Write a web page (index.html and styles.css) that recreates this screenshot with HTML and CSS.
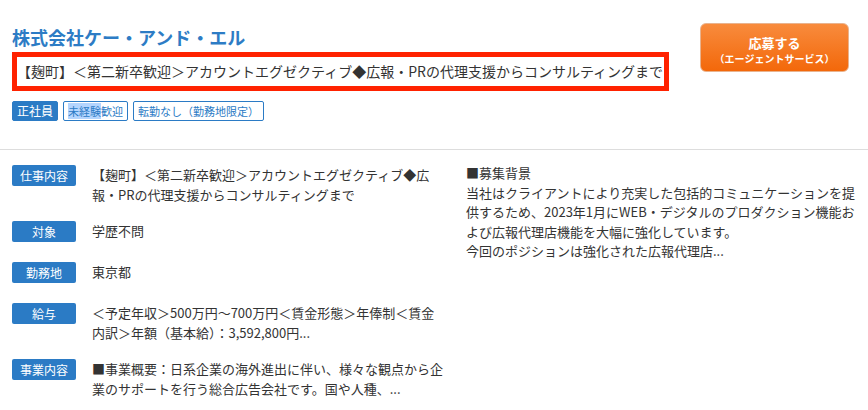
FILE: index.html
```html
<!DOCTYPE html>
<html lang="ja">
<head>
<meta charset="utf-8">
<title>株式会社ケー・アンド・エル</title>
<link rel="stylesheet" href="styles.css">
</head>
<body>
<div class="page">
  <header class="job-head">
    <div class="head-main">
      <h1 class="company">株式会社ケー・アンド・エル</h1>
      <h2 class="job-title">【麹町】＜第二新卒歓迎＞アカウントエグゼクティブ◆広報・PRの代理支援からコンサルティングまで</h2>
      <ul class="tags">
        <li class="tag tag-fill">正社員</li>
        <li class="tag"><span class="sel">未経験</span>歓迎</li>
        <li class="tag">転勤なし（勤務地限定）</li>
      </ul>
    </div>
    <a class="apply" href="#">
      <span class="apply-main">応募する</span>
      <span class="apply-sub">（エージェントサービス）</span>
    </a>
  </header>
  <section class="job-body">
    <div class="summary">
      <div class="row">
        <span class="label">仕事内容</span>
        <p class="val">【麹町】＜第二新卒歓迎＞アカウントエグゼクティブ◆広報・PRの代理支援からコンサルティングまで</p>
      </div>
      <div class="row">
        <span class="label">対象</span>
        <p class="val">学歴不問</p>
      </div>
      <div class="row">
        <span class="label">勤務地</span>
        <p class="val">東京都</p>
      </div>
      <div class="row">
        <span class="label">給与</span>
        <p class="val">＜予定年収＞500万円〜700万円＜賃金形態＞年俸制＜賃金内訳＞年額（基本給）：3,592,800円...</p>
      </div>
      <div class="row">
        <span class="label">事業内容</span>
        <p class="val">■事業概要：日系企業の海外進出に伴い、様々な観点から企業のサポートを行う総合広告会社です。国や人種、...</p>
      </div>
    </div>
    <div class="background">
      <p class="bg-text">■募集背景<br>当社はクライアントにより充実した包括的コミュニケーションを提供するため、2023年1月にWEB・デジタルのプロダクション機能および広報代理店機能を大幅に強化しています。<br>今回のポジションは強化された広報代理店...</p>
    </div>
  </section>
</div>
</body>
</html>
```

FILE: styles.css
```css
* {
  box-sizing: border-box;
}

html, body {
  margin: 0;
  padding: 0;
  background: #ffffff;
}

body {
  font-family: "Noto Sans CJK JP", "Noto Sans", sans-serif;
  color: #333333;
  width: 868px;
}

.job-head {
  display: flex;
  justify-content: space-between;
  align-items: flex-start;
  padding: 23px 19px 28px 12px;
  border-bottom: 1px solid #dddddd;
}

.head-main {
  display: flex;
  flex-direction: column;
  align-items: flex-start;
}

.company {
  margin: 2px 0 0;
  font-size: 18px;
  line-height: 24px;
  font-weight: bold;
  color: #2d7cc5;
}

.job-title {
  margin: 3px 0 0;
  display: inline-block;
  border: 5px solid #ff2200;
  padding: 0 1px 0 0;
  font-size: 14px;
  line-height: 29px;
  font-weight: normal;
  color: #333333;
  white-space: nowrap;
}

.tags {
  display: flex;
  gap: 5px;
  list-style: none;
  margin: 10px 0 0;
  padding: 0;
}

.tag {
  height: 20px;
  border: 1px solid #2b7bc5;
  border-radius: 2px;
  padding: 0 4px;
  font-size: 11px;
  line-height: 18px;
  color: #2b7bc5;
  background: #ffffff;
}

.tag-fill {
  background: #2b7bc5;
  color: #ffffff;
  font-size: 12px;
}

.sel {
  background: #b4d5fe;
}

.apply {
  display: flex;
  flex-direction: column;
  align-items: center;
  justify-content: center;
  width: 149px;
  height: 49px;
  padding-top: 5px;
  border: 1px solid #e9b38e;
  border-radius: 6px;
  background: linear-gradient(#f88b3d, #f3680a);
  color: #ffffff;
  text-decoration: none;
  font-weight: bold;
}

.apply-main {
  font-size: 13px;
  line-height: 18px;
}

.apply-sub {
  font-size: 10px;
  line-height: 14px;
}

.job-body {
  display: flex;
  gap: 20px;
  padding: 15px 10px 0 12px;
}

.summary {
  width: 434px;
  display: flex;
  flex-direction: column;
  gap: 16px;
}

.row {
  display: flex;
  align-items: flex-start;
}

.label {
  flex: none;
  width: 64px;
  height: 21px;
  margin: 0 16px 4px 0;
  border-radius: 2px;
  background: #2b7bc5;
  color: #ffffff;
  font-size: 12px;
  line-height: 21px;
  text-align: center;
}

.val {
  margin: 0;
  width: 354px;
  font-size: 13px;
  line-height: 20px;
}

.background {
  width: 396px;
  margin-top: -2px;
}

.bg-text {
  margin: 0;
  font-size: 13px;
  line-height: 19.5px;
}
```
